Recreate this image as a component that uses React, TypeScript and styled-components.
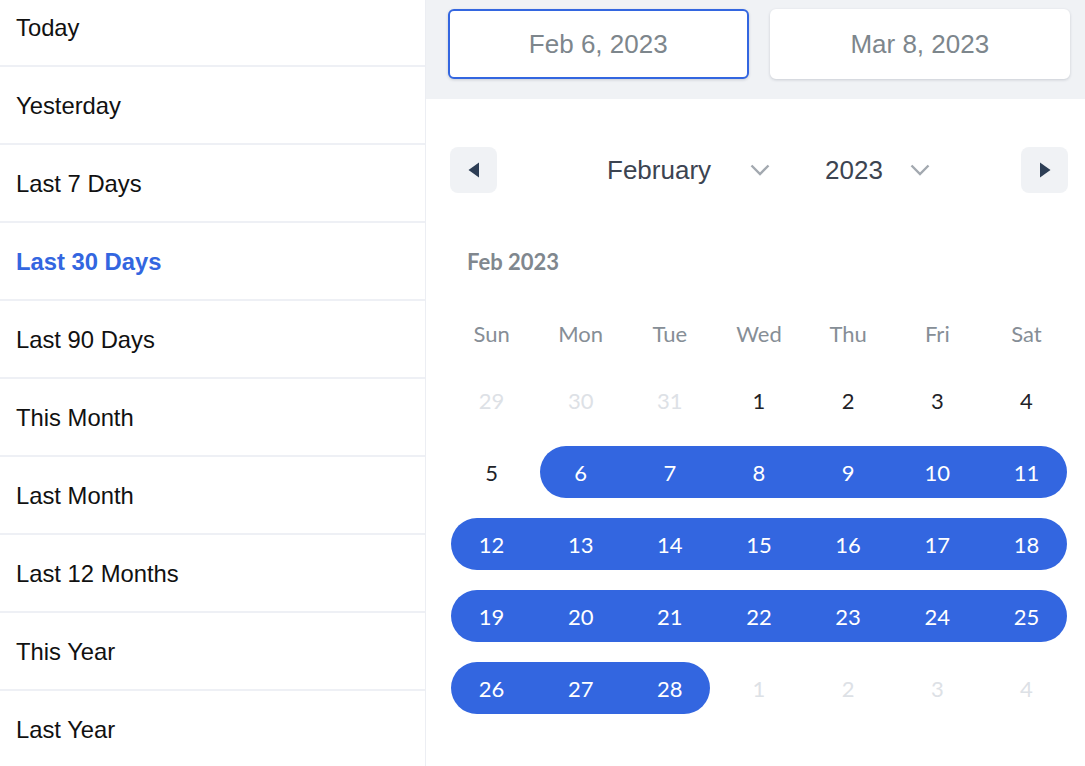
import styled, { createGlobalStyle } from 'styled-components';

const GlobalStyle = createGlobalStyle`
  * { box-sizing: border-box; }
  body {
    margin: 0;
    background: #fff;
    font-family: 'Liberation Sans', Arial, sans-serif;
  }
`;

const presets = [
  'Today',
  'Yesterday',
  'Last 7 Days',
  'Last 30 Days',
  'Last 90 Days',
  'This Month',
  'Last Month',
  'Last 12 Months',
  'This Year',
  'Last Year',
];

const weekdays = ['Sun', 'Mon', 'Tue', 'Wed', 'Thu', 'Fri', 'Sat'];

interface Day {
  label: number;
  outside: boolean;
}

const weeks: Day[][] = [
  [29, 30, 31, 1, 2, 3, 4],
  [5, 6, 7, 8, 9, 10, 11],
  [12, 13, 14, 15, 16, 17, 18],
  [19, 20, 21, 22, 23, 24, 25],
  [26, 27, 28, 1, 2, 3, 4],
].map((week, w) =>
  week.map((label) => ({
    label,
    outside: (w === 0 && label > 20) || (w === 4 && label < 10),
  })),
);

// selected range Feb 6 - Mar 8, shown only inside February
const inRange = (w: number, d: number) => {
  const day = weeks[w][d];
  if (day.outside) return false;
  return day.label >= 6;
};

const App = () => {
  return (
    <>
      <GlobalStyle />
      <Page>
        <Sidebar>
          <PresetList>
            {presets.map((p) => (
              <PresetItem key={p} $active={p === 'Last 30 Days'}>
                {p}
              </PresetItem>
            ))}
          </PresetList>
        </Sidebar>
        <Main>
          <Header>
            <DateInput $focused>Feb 6, 2023</DateInput>
            <DateInput>Mar 8, 2023</DateInput>
          </Header>
          <Calendar>
            <NavRow>
              <NavButton aria-label="Previous month">
                <svg width="12" height="16" viewBox="0 0 12 16">
                  <path d="M11 0.5 L0.5 8 L11 15.5 Z" fill="#2d3e55" />
                </svg>
              </NavButton>
              <Selects>
                <Select $width={183}>
                  February
                  <Chevron />
                </Select>
                <Select $width={125}>
                  2023
                  <Chevron />
                </Select>
              </Selects>
              <NavButton aria-label="Next month">
                <svg width="12" height="16" viewBox="0 0 12 16">
                  <path d="M1 0.5 L11.5 8 L1 15.5 Z" fill="#2d3e55" />
                </svg>
              </NavButton>
            </NavRow>
            <MonthTitle>Feb 2023</MonthTitle>
            <WeekdayRow>
              {weekdays.map((d) => (
                <Weekday key={d}>{d}</Weekday>
              ))}
            </WeekdayRow>
            <Weeks>
              {weeks.map((week, w) => (
                <WeekRow key={w}>
                  {week.map((day, d) => {
                    const sel = inRange(w, d);
                    const start = sel && (d === 0 || !inRange(w, d - 1));
                    const end = sel && (d === 6 || !inRange(w, d + 1));
                    return (
                      <DayCell
                        key={d}
                        $selected={sel}
                        $start={start}
                        $end={end}
                        $outside={day.outside}
                      >
                        {day.label}
                      </DayCell>
                    );
                  })}
                </WeekRow>
              ))}
            </Weeks>
          </Calendar>
        </Main>
      </Page>
    </>
  );
};

const Chevron = () => (
  <svg width="20" height="12" viewBox="0 0 20 12">
    <path
      d="M1.5 1.5 L10 10 L18.5 1.5"
      fill="none"
      stroke="#a3a9b0"
      strokeWidth="2.4"
    />
  </svg>
);

export default App;

const Page = styled.div`
  display: flex;
  width: 1085px;
  height: 766px;
  overflow: hidden;
`;

const Sidebar = styled.aside`
  width: 426px;
  flex-shrink: 0;
  border-right: 1px solid #eceef3;
  overflow: hidden;
`;

const PresetList = styled.ul`
  list-style: none;
  margin: -11px 0 0;
  padding: 0;
`;

const PresetItem = styled.li<{ $active?: boolean }>`
  height: 78px;
  display: flex;
  align-items: center;
  padding: 2px 0 0 16px;
  border-bottom: 2px solid #eef0f5;
  font-size: 23.8px;
  color: ${({ $active }) => ($active ? '#3366e0' : '#111')};
  font-weight: ${({ $active }) => ($active ? 700 : 400)};
`;

const Main = styled.main`
  flex: 1;
  display: flex;
  flex-direction: column;
`;

const Header = styled.div`
  height: 99px;
  background: #f0f2f5;
  display: grid;
  grid-template-columns: 1fr 1fr;
  gap: 21px;
  padding: 9px 15px 0 22px;
  align-items: start;
`;

const DateInput = styled.div<{ $focused?: boolean }>`
  height: 70px;
  background: #fff;
  border-radius: 6px;
  border: 2px solid ${({ $focused }) => ($focused ? '#3366e0' : '#fff')};
  box-shadow: 0 1px 3px rgba(30, 40, 60, 0.18);
  display: flex;
  align-items: center;
  justify-content: center;
  font-size: 26px;
  color: #7d868c;
`;

const Calendar = styled.div`
  flex: 1;
  padding: 48px 14px 0 21px;
  font-family: Lato, 'Noto Sans', sans-serif;
`;

const NavRow = styled.div`
  display: flex;
  align-items: center;
  height: 46px;
  padding: 0 3px;
`;

const NavButton = styled.button`
  width: 47px;
  height: 46px;
  border: none;
  border-radius: 8px;
  background: #f0f2f5;
  display: flex;
  align-items: center;
  justify-content: center;
  padding: 0;
  cursor: pointer;
`;

const Selects = styled.div`
  flex: 1;
  display: flex;
  justify-content: center;
  gap: 35px;
  padding-left: 19px;
`;

const Select = styled.div<{ $width: number }>`
  width: ${({ $width }) => $width}px;
  display: flex;
  align-items: center;
  justify-content: space-between;
  padding: 0 10px;
  font-family: 'Liberation Sans', Arial, sans-serif;
  font-size: 26px;
  color: #3c4451;
`;

const MonthTitle = styled.div`
  height: 52px;
  margin-top: 42px;
  display: flex;
  align-items: center;
  padding-left: 20px;
  font-size: 22px;
  font-weight: 700;
  color: #80878e;
`;

const WeekdayRow = styled.div`
  display: grid;
  grid-template-columns: repeat(7, 1fr);
  height: 52px;
  margin-top: 20px;
`;

const Weekday = styled.div`
  display: flex;
  align-items: center;
  justify-content: center;
  font-size: 22px;
  color: #868e96;
`;

const Weeks = styled.div`
  display: flex;
  flex-direction: column;
  gap: 20px;
  margin-top: 15px;
`;

const WeekRow = styled.div`
  display: grid;
  grid-template-columns: repeat(7, 1fr);
  height: 52px;
`;

const DayCell = styled.div<{
  $selected: boolean;
  $start: boolean;
  $end: boolean;
  $outside: boolean;
}>`
  display: flex;
  align-items: center;
  justify-content: center;
  font-size: 22px;
  color: ${({ $selected, $outside }) =>
    $selected ? '#fff' : $outside ? '#dde1e6' : '#1f2328'};
  background: ${({ $selected }) => ($selected ? '#3366e0' : 'transparent')};
  margin-left: ${({ $start }) => ($start ? '4px' : '0')};
  margin-right: ${({ $end }) => ($end ? '4px' : '0')};
  border-radius: ${({ $start, $end }) =>
    `${$start ? '26px' : '0'} ${$end ? '26px' : '0'} ${$end ? '26px' : '0'} ${
      $start ? '26px' : '0'
    }`};
  padding-left: ${({ $start }) => ($start ? '0' : '4px')};
  padding-right: ${({ $end }) => ($end ? '0' : '4px')};
`;
